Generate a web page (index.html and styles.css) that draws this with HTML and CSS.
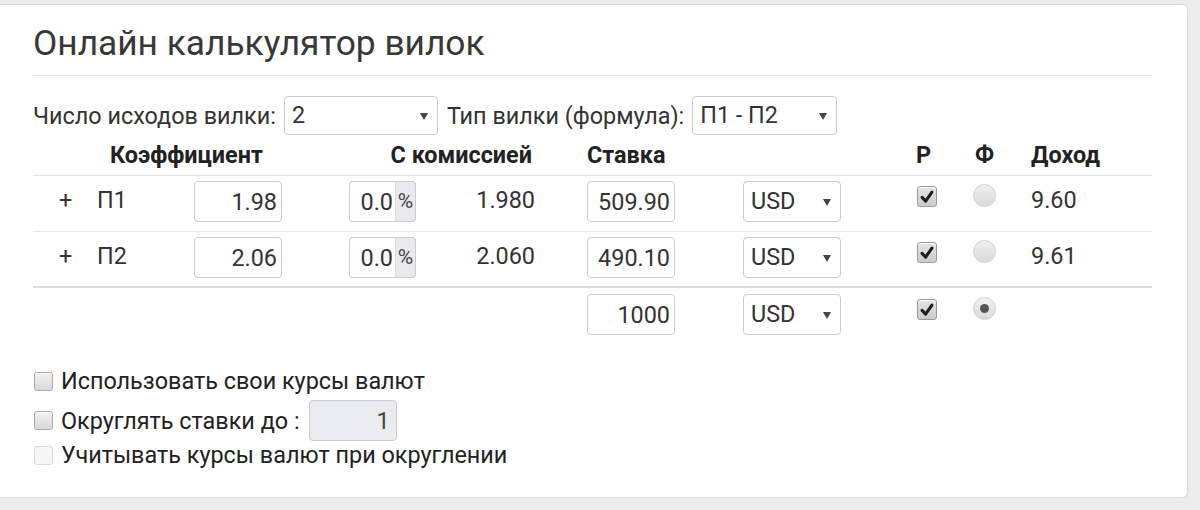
FILE: index.html
```html
<!DOCTYPE html>
<html lang="ru">
<head>
<meta charset="utf-8">
<title>Онлайн калькулятор вилок</title>
<link rel="stylesheet" href="styles.css">
</head>
<body>
<div class="card">
  <h1 class="title">Онлайн калькулятор вилок</h1>
  <div class="options">
    <span class="label">Число исходов вилки:</span>
    <div class="select sel-count"><span>2</span><i class="arrow"></i></div>
    <span class="label">Тип вилки (формула):</span>
    <div class="select sel-type"><span>П1 - П2</span><i class="arrow"></i></div>
  </div>

  <div class="calc">
    <div class="row head">
      <div class="h-coef">Коэффициент</div>
      <div class="h-comm">С комиссией</div>
      <div class="h-stake">Ставка</div>
      <div class="h-r">Р</div>
      <div class="h-f">Ф</div>
      <div class="h-inc">Доход</div>
    </div>

    <div class="row line">
      <div class="c-plus">+</div>
      <div class="c-name">П1</div>
      <div class="c-coef"><input class="field num w88" value="1.98"></div>
      <div class="c-comm"><div class="group"><input class="field num gin" value="0.0"><span class="addon">%</span></div></div>
      <div class="c-val">1.980</div>
      <div class="c-stake"><input class="field num w88" value="509.90"></div>
      <div class="c-cur"><div class="select sel-cur"><span>USD</span><i class="arrow"></i></div></div>
      <div class="c-r"><span class="cb checked"><svg viewBox="0 0 20 20" width="18" height="18"><path d="M4.5 10.5 L8.5 14.5 L15.5 4.5" fill="none" stroke="#1e1e1e" stroke-width="3.4" stroke-linecap="round" stroke-linejoin="round"/></svg></span></div>
      <div class="c-f"><span class="radio"></span></div>
      <div class="c-inc">9.60</div>
    </div>

    <div class="row line last">
      <div class="c-plus">+</div>
      <div class="c-name">П2</div>
      <div class="c-coef"><input class="field num w88" value="2.06"></div>
      <div class="c-comm"><div class="group"><input class="field num gin" value="0.0"><span class="addon">%</span></div></div>
      <div class="c-val">2.060</div>
      <div class="c-stake"><input class="field num w88" value="490.10"></div>
      <div class="c-cur"><div class="select sel-cur"><span>USD</span><i class="arrow"></i></div></div>
      <div class="c-r"><span class="cb checked"><svg viewBox="0 0 20 20" width="18" height="18"><path d="M4.5 10.5 L8.5 14.5 L15.5 4.5" fill="none" stroke="#1e1e1e" stroke-width="3.4" stroke-linecap="round" stroke-linejoin="round"/></svg></span></div>
      <div class="c-f"><span class="radio"></span></div>
      <div class="c-inc">9.61</div>
    </div>

    <div class="row total">
      <div class="c-stake"><input class="field num w88" value="1000"></div>
      <div class="c-cur"><div class="select sel-cur"><span>USD</span><i class="arrow"></i></div></div>
      <div class="c-r"><span class="cb checked"><svg viewBox="0 0 20 20" width="18" height="18"><path d="M4.5 10.5 L8.5 14.5 L15.5 4.5" fill="none" stroke="#1e1e1e" stroke-width="3.4" stroke-linecap="round" stroke-linejoin="round"/></svg></span></div>
      <div class="c-f"><span class="radio on"></span></div>
    </div>
  </div>

  <div class="settings">
    <label class="opt o1"><span class="cb"></span><span>Использовать свои курсы валют</span></label>
    <label class="opt o2"><span class="cb"></span><span>Округлять ставки до :</span><input class="field num w88 off" value="1"></label>
    <label class="opt o3"><span class="cb disabled"></span><span>Учитывать курсы валют при округлении</span></label>
  </div>
</div>
</body>
</html>
```

FILE: styles.css
```css
html, body {
  margin: 0;
  padding: 0;
  background: #ececec;
  font-family: Roboto, "Noto Sans", Arial, sans-serif;
  color: #333;
  overflow: hidden;
}

.card {
  box-sizing: border-box;
  margin: 4px 12px 0 -10px;
  height: 494px;
  padding: 0 35px 0 42px;
  background: #fff;
  border: 1px solid #dcdcdc;
  border-radius: 6px;
  box-shadow: 0 2px 2px rgba(0,0,0,0.08);
}

.title {
  margin: 0;
  padding: 18px 0 12px;
  font-size: 35.3px;
  line-height: 40px;
  font-weight: 400;
  color: #383838;
  border-bottom: 1px solid #e8e8e8;
}

.options {
  display: flex;
  align-items: center;
  margin-top: 20px;
  height: 39px;
  font-size: 23.4px;
}
.options .label { margin-right: 8px; }
.options .sel-count { width: 154px; margin-right: 9px; }
.options .sel-type { width: 145px; }

.select {
  position: relative;
  box-sizing: border-box;
  height: 39px;
  border: 1px solid #ccc;
  border-radius: 4px;
  background: #fff;
  padding: 0 0 0 7px;
  line-height: 37px;
  font-size: 23.4px;
  color: #333;
}
.arrow {
  position: absolute;
  right: 9px;
  top: 50%;
  margin-top: -3px;
  width: 0;
  height: 0;
  border-left: 4px solid transparent;
  border-right: 4px solid transparent;
  border-top: 7px solid #444;
}

.calc { margin-top: 6px; }
.row {
  display: grid;
  grid-template-columns: 57px 100px 150px 100px 140px 155px 170px 55px 60px 132px;
  font-size: 23.4px;
}
.head {
  font-weight: 700;
  line-height: 28px;
  padding-bottom: 6px;
  border-bottom: 1px solid #e4e4e4;
  color: #222;
}
.h-coef { grid-column: 2 / 4; padding-left: 20px; }
.h-comm { grid-column: 4 / 6; text-align: right; padding-right: 48px; }
.h-stake { grid-column: 6; padding-left: 7px; }
.h-r { grid-column: 8; padding-left: 11px; }
.h-f { grid-column: 9; padding-left: 15px; }
.h-inc { grid-column: 10; padding-left: 11px; }

.line {
  padding: 5px 0 9px;
  border-bottom: 1px solid #e6e6e6;
  line-height: 38px;
}
.line.last { border-bottom: 2px solid #dedede; padding-bottom: 8px; }
.total { padding: 6px 0; line-height: 38px; }

.c-plus { grid-column: 1; padding-left: 26px; }
.c-name { grid-column: 2; padding-left: 7px; }
.c-coef { grid-column: 3; padding-left: 4px; }
.c-comm { grid-column: 4; padding-left: 9px; }
.c-val { grid-column: 5; text-align: right; padding-right: 45px; }
.c-stake { grid-column: 6; padding-left: 7px; }
.c-cur { grid-column: 7; padding-left: 8px; }
.c-r { grid-column: 8; padding-left: 12px; display: flex; align-items: flex-start; padding-top: 5px; }
.c-f { grid-column: 9; padding-left: 13px; display: flex; align-items: flex-start; padding-top: 3px; }
.c-inc { grid-column: 10; padding-left: 11px; }

.field {
  box-sizing: border-box;
  height: 41px;
  border: 1px solid #ccc;
  border-radius: 4px;
  font-family: Roboto, "Noto Sans", Arial, sans-serif;
  font-size: 23.4px;
  color: #333;
  background: #fff;
  padding: 0 4px;
  margin: 0;
  vertical-align: top;
  outline: none;
}
.num { text-align: right; }
.w88 { width: 88px; }
.sel-cur { width: 98px; height: 41px; line-height: 39px; padding-left: 7px; }

.group { display: flex; width: 67px; height: 41px; }
.group .gin {
  width: 46px;
  border-radius: 4px 0 0 4px;
  border-right: 0;
  padding-right: 2px;
}
.addon {
  box-sizing: border-box;
  width: 21px;
  height: 41px;
  border: 1px solid #ccc;
  border-left: 1px solid #dcdcdc;
  border-radius: 0 4px 4px 0;
  background: #e9eaed;
  font-size: 21px;
  line-height: 39px;
  text-align: center;
  color: #444;
}

.cb {
  box-sizing: border-box;
  display: inline-block;
  width: 19px;
  height: 19px;
  border: 1px solid #a9a9a9;
  border-radius: 3px;
  background: linear-gradient(#f2f2f2, #d8d8d8);
  box-shadow: inset 0 1px 0 #fff;
  flex: none;
}
.cb.checked {
  display: inline-flex;
  align-items: center;
  justify-content: center;
  width: 20px;
  height: 21px;
  border-color: #9a9a9a;
  background: linear-gradient(#e6e6e6, #cbcbcb);
}
.cb.checked svg { display: block; }
.cb.disabled {
  border-color: #dadada;
  background: #f6f6f6;
  box-shadow: none;
}
.radio {
  box-sizing: border-box;
  display: inline-flex;
  align-items: center;
  justify-content: center;
  width: 23px;
  height: 23px;
  border-radius: 50%;
  border: 1px solid #cfcfcf;
  background: linear-gradient(#f0f0f0, #dadada);
}
.radio.on::after {
  content: "";
  width: 9px;
  height: 9px;
  border-radius: 50%;
  background: #555;
}

.settings { margin-top: 21px; font-size: 23.4px; }
.opt { display: flex; align-items: center; color: #222; }
.opt .cb { margin: 0 8px 0 1px; }
.o1 { height: 38px; }
.o2 { height: 41px; }
.o2 .field { margin-left: 9px; }
.o3 { height: 28px; }
.off { background: #eaebee; color: #444; padding-right: 6px; }
```
